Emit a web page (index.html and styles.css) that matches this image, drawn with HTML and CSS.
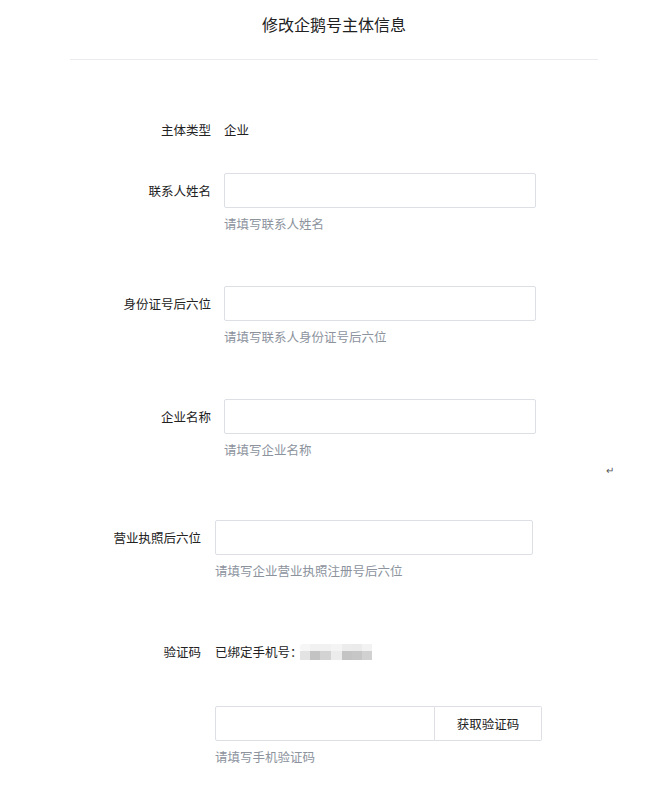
FILE: index.html
```html
<!DOCTYPE html>
<html lang="zh-CN">
<head>
  <meta charset="UTF-8" />
  <title>修改企鹅号主体信息</title>
  <meta name="viewport" content="width=device-width, initial-scale=1" />
  <link rel="stylesheet" href="styles.css">
</head>
<body>

  <header class="page-head">
    <h1>修改企鹅号主体信息</h1>
  </header>

  <form class="info-form" novalidate>
    <!-- 主体信息 -->
    <div class="group group-main">
      <div class="row row-text">
        <span class="label">主体类型</span>
        <span class="value">企业</span>
      </div>

      <div class="row row-field">
        <label class="label" for="contact">联系人姓名</label>
        <div class="control">
          <input class="field" type="text" id="contact" />
          <p class="hint">请填写联系人姓名</p>
        </div>
      </div>

      <div class="row row-field">
        <label class="label" for="idcard">身份证号后六位</label>
        <div class="control">
          <input class="field" type="text" id="idcard" />
          <p class="hint">请填写联系人身份证号后六位</p>
        </div>
      </div>

      <div class="row row-field">
        <label class="label" for="company">企业名称</label>
        <div class="control">
          <input class="field" type="text" id="company" />
          <p class="hint">请填写企业名称</p>
        </div>
      </div>
    </div>

    <p class="stray">↵</p>

    <!-- 执照与验证 -->
    <div class="group group-extra">
      <div class="row row-field">
        <label class="label" for="license">营业执照后六位</label>
        <div class="control">
          <input class="field" type="text" id="license" />
          <p class="hint">请填写企业营业执照注册号后六位</p>
        </div>
      </div>

      <div class="row row-text row-phone">
        <span class="label">验证码</span>
        <span class="value">已绑定手机号：<svg class="mask" width="72" height="16" viewBox="0 0 72 16" aria-hidden="true">
            <rect x="0" y="0" width="10" height="7" rx="3" fill="#f6f6f6"/>
            <rect x="3" y="0" width="7" height="7" fill="#f6f6f6"/>
            <rect x="10" y="0" width="10" height="7" fill="#f1f1f1"/>
            <rect x="20" y="0" width="11" height="7" fill="#f1f1f1"/>
            <rect x="31" y="0" width="11" height="7" fill="#f4f4f4"/>
            <rect x="42" y="0" width="10" height="7" fill="#ececec"/>
            <rect x="52" y="0" width="10" height="7" fill="#ebebeb"/>
            <rect x="62" y="0" width="10" height="7" fill="#f2f2f2"/>
            <rect x="0" y="7" width="10" height="9" fill="#e3e3e3"/>
            <rect x="10" y="7" width="10" height="9" fill="#c3c3c3"/>
            <rect x="20" y="7" width="11" height="9" fill="#d3d3d3"/>
            <rect x="31" y="7" width="11" height="9" fill="#ececec"/>
            <rect x="42" y="7" width="10" height="9" fill="#c4c4c4"/>
            <rect x="52" y="7" width="10" height="9" fill="#c6c6c6"/>
            <rect x="62" y="7" width="10" height="9" fill="#d1d1d1"/>
          </svg></span>
      </div>

      <div class="row row-field row-code">
        <span class="label"></span>
        <div class="control">
          <div class="code-box">
            <input class="field code-input" type="text" id="code" aria-label="验证码" />
            <button class="code-btn" type="button">获取验证码</button>
          </div>
          <p class="hint">请填写手机验证码</p>
        </div>
      </div>
    </div>
  </form>

</body>
</html>
```

FILE: styles.css
```css
/* Reset básico */
* {
  box-sizing: border-box;
  margin: 0;
  padding: 0;
  font-family: "Noto Sans CJK SC", "Noto Sans", sans-serif;
}

body {
  width: 650px;
  min-height: 790px;
  background: #fff;
  color: #222;
  font-size: 12.5px;
}

/* Cabecera */
.page-head {
  margin-left: 70px;
  width: 528px;
  padding: 12px 0 23px;
  border-bottom: 1px solid #e9ebee;
  text-align: center;
}
.page-head h1 {
  font-size: 16px;
  font-weight: 400;
  line-height: 24px;
  color: #222;
}

/* Filas */
.row {
  display: flex;
  align-items: flex-start;
}
.label {
  flex: none;
  text-align: right;
  line-height: 35px;
  color: #222;
  white-space: nowrap;
}
.group-main .label {
  width: 224px;
  padding-right: 13px;
}
.group-extra .label {
  width: 215px;
  padding-right: 14px;
}
.value {
  line-height: 35px;
  color: #222;
  display: flex;
  align-items: center;
}
.mask {
  display: block;
  margin-left: -3px;
  margin-top: 1px;
}

.group-main {
  margin-top: 52px;
}
.group-main .row-text {
  margin-bottom: 26px;
}
.group-main .row-field + .row-field {
  margin-top: 53px;
}

.field {
  display: block;
  height: 35px;
  border: 1px solid #dcdfe4;
  border-radius: 2px;
  background: #fff;
  padding: 0 10px;
  font-size: 13px;
  outline: none;
}
.group-main .field {
  width: 312px;
}
.group-extra .field {
  width: 318px;
}
.hint {
  margin-top: 7px;
  line-height: 18px;
  color: #8c939d;
}

/* Marca suelta */
.stray {
  padding-left: 606px;
  margin-top: 2px;
  line-height: 18px;
  font-size: 10px;
  color: #555;
}

.group-extra {
  margin-top: 41px;
}
.row-phone {
  margin-top: 54px;
}
.row-code {
  margin-top: 37px;
}

/* Código */
.code-box {
  display: flex;
}
.group-extra .code-input {
  width: 220px;
  border-radius: 2px 0 0 2px;
}
.code-btn {
  width: 107px;
  height: 35px;
  border: 1px solid #dcdfe4;
  border-left: none;
  border-radius: 0 2px 2px 0;
  background: #fff;
  color: #222;
  font-size: 12.5px;
  cursor: pointer;
}
```
